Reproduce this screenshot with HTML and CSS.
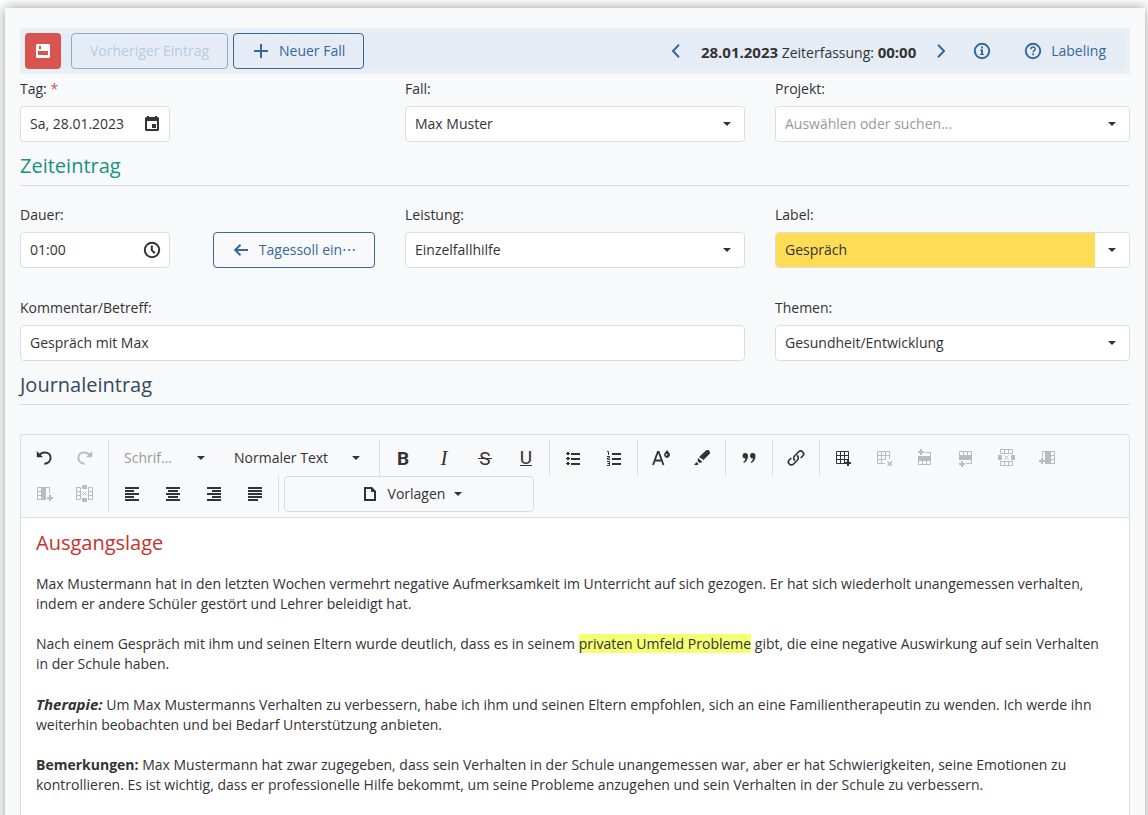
FILE: index.html
```html
<!DOCTYPE html>
<html lang="de">
<head>
  <meta charset="UTF-8">
  <meta name="viewport" content="width=device-width, initial-scale=1.0">
  <title>Zeiteintrag</title>
  <link rel="stylesheet" href="styles.css">
</head>
<body>
  <!-- Icons -->
  <svg class="sprite" aria-hidden="true">
    <symbol id="i-save" viewBox="0 0 18 18"><path fill="currentColor" fill-rule="evenodd" d="M3 2h12l1 1v12l-1 1H3l-1-1V3zM5 4v3h2V4zM4 9v4h10V9z"/></symbol>
    <symbol id="i-plus" viewBox="0 0 18 18"><path fill="currentColor" d="M8 2h2v6h6v2h-6v6H8v-6H2V8h6z"/></symbol>
    <symbol id="i-left" viewBox="0 0 18 18"><path class="line" d="M12 2.8L6 9l6 6.2"/></symbol>
    <symbol id="i-right" viewBox="0 0 18 18"><path class="line" d="M6 2.8L12 9l-6 6.2"/></symbol>
    <symbol id="i-info" viewBox="0 0 18 18"><circle class="line" cx="9" cy="9" r="7.2"/><path fill="currentColor" d="M8 4.500h2v2H8zM7 7.500h3V12h1v1H7v-1h1V8.500H7z"/></symbol>
    <symbol id="i-help" viewBox="0 0 18 18"><circle class="line" cx="9" cy="9" r="7.2"/><path class="line" stroke-width="1.5" d="M6.8 7.2C6.8 4.300 11.300 4.300 11.300 7c0 1.600-2.200 1.700-2.200 3.500"/><path fill="currentColor" d="M8.200 11.500H10v1.800H8.200z"/></symbol>
    <symbol id="i-back" viewBox="0 0 18 18"><path class="line" d="M16 9H3M8.500 3.800L3.200 9l5.300 5.200"/></symbol>
    <symbol id="i-calendar" viewBox="0 0 18 18"><path fill="currentColor" fill-rule="evenodd" d="M4 1h2v1h6V1h2v1h1l1 1v12l-1 1H3l-1-1V3l1-1h1zM4 6v8h10V6zM9 9h4v4H9z"/></symbol>
    <symbol id="i-clock" viewBox="0 0 18 18"><circle class="line" cx="9" cy="9" r="7.2"/><path class="line" d="M8.800 4.500V9.200l3 3"/></symbol>
    <symbol id="i-undo" viewBox="0 0 18 18"><path fill="currentColor" d="M1.800 2v6.200H8z"/><path class="line" d="M4.300 6.200C6 4 7.800 3.500 9.800 3.500c3.500 0 5.800 2.300 5.800 5.300 0 3.200-2.500 5.800-6.300 5.900"/></symbol>
    <symbol id="i-redo" viewBox="0 0 18 18"><path fill="currentColor" d="M16.200 2v6.200H10z"/><path class="line" d="M13.700 6.200C12 4 10.200 3.500 8.200 3.500c-3.500 0-5.800 2.300-5.800 5.300 0 3.200 2.500 5.800 6.300 5.900"/></symbol>
    <symbol id="i-bullets" viewBox="0 0 18 18"><path fill="currentColor" d="M3 3h2v1h1v1H5v1H3V5H2V4h1zM3 8h2v1h1v1H5v1H3v-1H2V9h1zM3 13h2v1h1v1H5v1H3v-1H2v-1h1zM7 4h9v2H7zM7 9h9v2H7zM7 14h9v2H7z"/></symbol>
    <symbol id="i-numbers" viewBox="0 0 18 18"><path fill="currentColor" d="M7 4h9v2H7zM7 9h9v2H7zM7 14h9v2H7z"/><path class="cells" d="M2 2.500h1.500V6M2 7.500h2.500V9H2.500v1.500H5M2 12.500h2.500v4H2M2.500 14.500h2"/></symbol>
    <symbol id="i-color" viewBox="0 0 18 18"><path class="line" stroke-width="1.8" d="M1 16L5.800 3h.9L11.500 16M3 11.500h6.500"/><path fill="currentColor" fill-rule="evenodd" d="M15 1l2.300 3a2.900 2.900 0 1 1-4.600 0zM13.600 5v1.500h1.600V5z"/></symbol>
    <symbol id="i-marker" viewBox="0 0 18 18"><path fill="currentColor" d="M13.500 1h2L17 3v1.500L10.500 11 6 8zM5 9l4.500 4-3 1L4.500 12zM3.500 13l2 2L4.500 16H1z"/></symbol>
    <symbol id="i-quote" viewBox="0 0 18 18"><path fill="currentColor" d="M5.200 4a2.700 2.700 0 0 1 2.800 3c0 3-1.500 5.700-4 7l-.8-1c1.600-1.100 2.200-2.200 2.200-3.500A2.700 2.700 0 1 1 5.200 4zM12.700 4a2.700 2.700 0 0 1 2.800 3c0 3-1.500 5.700-4 7l-.8-1c1.600-1.100 2.200-2.200 2.200-3.500A2.700 2.700 0 1 1 12.700 4z"/></symbol>
    <symbol id="i-link" viewBox="0 0 18 18"><path class="line" stroke-width="1.700" d="M8 11.500C6 10 6.500 8 8 6.500l3.500-3.500c1.300-1.300 3-1.200 4.200 0s1.200 2.800 0 4l-2 2M10 6.500c2 1.500 1.500 3.500 0 5L6.500 15c-1.300 1.300-3 1.200-4.200 0s-1.200-2.800 0-4l2-2"/></symbol>
    <symbol id="i-table-add" viewBox="0 0 18 18"><path class="cells" d="M14.500 11V2.500H2.500v12H11M2.500 6.500h12M2.500 10.500h12M6.500 2.500v12M10.500 2.500v12"/><path fill="currentColor" d="M13 11h2v2h2v2h-2v2h-2v-2h-2v-2h2z"/></symbol>
    <symbol id="i-table-del" viewBox="0 0 18 18"><path class="cells" d="M14.500 10V2.500H2.500v12H10M2.500 6.500h12M2.500 10.500h8M6.500 2.500v12M10.500 2.500v8"/><path class="line" stroke-width="1.400" d="M12.500 12.500l4.500 4.500M17 12.500L12.500 17"/></symbol>
    <symbol id="i-row-above" viewBox="0 0 18 18"><path class="cells" d="M9 3.500h5.500v12h-12v-4M6.500 11v4M10.500 11v4"/><path fill="currentColor" d="M2 7h13v5H2zM4 0h2v2h2v2H6v2H4V4H2V2h2z"/></symbol>
    <symbol id="i-row-below" viewBox="0 0 18 18"><path class="cells" d="M9 14.500h5.500v-12h-12v4M6.500 2v4M10.500 2v4"/><path fill="currentColor" d="M2 6h13v5H2zM4 12h2v2h2v2H6v2H4v-2H2v-2h2z"/></symbol>
    <symbol id="i-row-del" viewBox="0 0 18 18"><path class="cells" d="M2.500 .5h12v4h-12zM6.500 .5v4M10.500 .5v4M2.500 12.500h12v4h-12zM6.500 12.500v4M10.500 12.500v4"/><path class="cells" d="M6.500 6.500l4 4M10.500 6.500l-4 4"/><path fill="currentColor" d="M0 6h4v5H0zM13 6h4v5h-4z"/></symbol>
    <symbol id="i-col-left" viewBox="0 0 18 18"><path class="cells" d="M3.500 8V2.500h12v12H7M11 6.500h4M11 10.500h4"/><path fill="currentColor" d="M6 2h6v13H6zM2 9h2v2h2v2H4v2H2v-2H0v-2h2z"/></symbol>
    <symbol id="i-col-right" viewBox="0 0 18 18"><path class="cells" d="M14.500 8V2.500h-12v12H11M2 6.500h4M2 10.500h4"/><path fill="currentColor" d="M6 2h5v13H6zM14 10h2v2h2v2h-2v2h-2v-2h-2v-2h2z"/></symbol>
    <symbol id="i-col-del" viewBox="0 0 18 18"><path class="cells" d="M.5 2.500h4v12h-4zM.5 6.500h4M.5 10.500h4M12.500 2.500h4v12h-4zM12.500 6.500h4M12.500 10.500h4"/><path class="cells" d="M6.500 6.500l4 4M10.500 6.500l-4 4"/><path fill="currentColor" d="M6 0h5v4H6zM6 13h5v4H6z"/></symbol>
    <symbol id="i-al-left" viewBox="0 0 18 18"><path fill="currentColor" d="M2 2h14v2H2zM2 5h9v2H2zM2 8h14v2H2zM2 11h9v2H2zM2 14h14v2H2z"/></symbol>
    <symbol id="i-al-center" viewBox="0 0 18 18"><path fill="currentColor" d="M2 2h14v2H2zM4 5h10v2H4zM2 8h14v2H2zM4 11h10v2H4zM2 14h14v2H2z"/></symbol>
    <symbol id="i-al-right" viewBox="0 0 18 18"><path fill="currentColor" d="M2 2h14v2H2zM7 5h9v2H7zM2 8h14v2H2zM7 11h9v2H7zM2 14h14v2H2z"/></symbol>
    <symbol id="i-al-justify" viewBox="0 0 18 18"><path fill="currentColor" d="M2 2h14v2H2zM2 5h14v2H2zM2 8h14v2H2zM2 11h14v2H2zM2 14h10v2H2z"/></symbol>
    <symbol id="i-doc" viewBox="0 0 18 18"><path fill="currentColor" fill-rule="evenodd" d="M3 2h8l4 4v10H3zM5 4v10h8V7h-3V4z"/></symbol>
  </svg>

  <main class="card">
    <div class="topbar">
      <div class="topbar-inner">
        <button class="btn btn-save" type="button" aria-label="Speichern"><svg class="icon"><use href="#i-save"/></svg></button>
        <button class="btn btn-outline" type="button" disabled>Vorheriger Eintrag</button>
        <button class="btn btn-outline" type="button"><svg class="icon"><use href="#i-plus"/></svg>Neuer Fall</button>
        <div class="topbar-right">
          <button class="btn btn-icon" type="button" aria-label="Tag zurück"><svg class="icon"><use href="#i-left"/></svg></button>
          <span class="day"><b>28.01.2023</b> Zeiterfassung: <b>00:00</b></span>
          <button class="btn btn-icon" type="button" aria-label="Tag vor"><svg class="icon"><use href="#i-right"/></svg></button>
          <button class="btn btn-icon" type="button" aria-label="Info"><svg class="icon"><use href="#i-info"/></svg></button>
          <button class="btn btn-text" type="button"><svg class="icon"><use href="#i-help"/></svg>Labeling</button>
        </div>
      </div>
    </div>

    <form>
      <div class="grid">
        <div class="field">
          <label for="tag">Tag: <span class="required">*</span></label>
          <div class="box box-short">
            <input id="tag" type="text" value="Sa, 28.01.2023">
            <svg class="icon"><use href="#i-calendar"/></svg>
          </div>
        </div>
        <div class="field">
          <label for="fall">Fall:</label>
          <div class="box caret"><select id="fall"><option>Max Muster</option></select></div>
        </div>
        <div class="field">
          <label for="projekt">Projekt:</label>
          <div class="box caret"><select id="projekt" class="empty"><option>Auswählen oder suchen...</option></select></div>
        </div>
      </div>

      <h2 class="section section-time">Zeiteintrag</h2>

      <div class="grid grid-time">
        <div class="field">
          <label for="dauer">Dauer:</label>
          <div class="duration">
            <div class="box box-short">
              <input id="dauer" type="text" value="01:00">
              <svg class="icon"><use href="#i-clock"/></svg>
            </div>
            <button class="btn btn-outline btn-fill" type="button"><svg class="icon"><use href="#i-back"/></svg>Tagessoll ein⋯</button>
          </div>
        </div>
        <div class="field">
          <label for="leistung">Leistung:</label>
          <div class="box caret"><select id="leistung"><option>Einzelfallhilfe</option></select></div>
        </div>
        <div class="field">
          <label for="label">Label:</label>
          <div class="box caret"><select id="label" class="yellow"><option>Gespräch</option></select></div>
        </div>
        <div class="field wide">
          <label for="kommentar">Kommentar/Betreff:</label>
          <div class="box"><input id="kommentar" type="text" value="Gespräch mit Max"></div>
        </div>
        <div class="field">
          <label for="themen">Themen:</label>
          <div class="box caret"><select id="themen"><option>Gesundheit/Entwicklung</option></select></div>
        </div>
      </div>

      <h2 class="section">Journaleintrag</h2>
    </form>

    <div class="editor">
      <div class="tools" role="toolbar" aria-label="Formatierung">
        <button class="btn btn-tool" type="button" aria-label="Rückgängig"><svg class="icon"><use href="#i-undo"/></svg></button>
        <button class="btn btn-tool" type="button" aria-label="Wiederholen" disabled><svg class="icon"><use href="#i-redo"/></svg></button>
        <span class="sep"></span>
        <div class="pick pick-font caret"><select class="empty" aria-label="Schriftart"><option>Schrif...</option></select></div>
        <div class="pick pick-style caret"><select aria-label="Absatzformat"><option>Normaler Text</option></select></div>
        <span class="sep"></span>
        <button class="btn btn-tool" type="button" aria-label="Fett"><svg class="icon" viewBox="0 0 18 18"><text class="glyph glyph-bold" x="9" y="16" text-anchor="middle">B</text></svg></button>
        <button class="btn btn-tool" type="button" aria-label="Kursiv"><svg class="icon" viewBox="0 0 18 18"><text class="glyph glyph-italic" x="9" y="16" text-anchor="middle">I</text></svg></button>
        <button class="btn btn-tool" type="button" aria-label="Durchgestrichen"><svg class="icon" viewBox="0 0 18 18"><text class="glyph" x="9" y="16" text-anchor="middle">S</text><path fill="currentColor" d="M2 9h14v1H2z"/></svg></button>
        <button class="btn btn-tool" type="button" aria-label="Unterstrichen"><svg class="icon" viewBox="0 0 18 18"><text class="glyph" x="9" y="15" text-anchor="middle">U</text><path fill="currentColor" d="M3 16h12v1H3z"/></svg></button>
        <span class="sep"></span>
        <button class="btn btn-tool" type="button" aria-label="Aufzählung"><svg class="icon"><use href="#i-bullets"/></svg></button>
        <button class="btn btn-tool" type="button" aria-label="Nummerierung"><svg class="icon"><use href="#i-numbers"/></svg></button>
        <span class="sep"></span>
        <button class="btn btn-tool" type="button" aria-label="Textfarbe"><svg class="icon"><use href="#i-color"/></svg></button>
        <button class="btn btn-tool" type="button" aria-label="Hintergrundfarbe"><svg class="icon"><use href="#i-marker"/></svg></button>
        <span class="sep"></span>
        <button class="btn btn-tool" type="button" aria-label="Zitat"><svg class="icon"><use href="#i-quote"/></svg></button>
        <span class="sep"></span>
        <button class="btn btn-tool" type="button" aria-label="Link"><svg class="icon"><use href="#i-link"/></svg></button>
        <span class="sep"></span>
        <button class="btn btn-tool" type="button" aria-label="Tabelle einfügen"><svg class="icon"><use href="#i-table-add"/></svg></button>
        <button class="btn btn-tool" type="button" aria-label="Tabelle löschen" disabled><svg class="icon"><use href="#i-table-del"/></svg></button>
        <button class="btn btn-tool" type="button" aria-label="Zeile oberhalb" disabled><svg class="icon"><use href="#i-row-above"/></svg></button>
        <button class="btn btn-tool" type="button" aria-label="Zeile unterhalb" disabled><svg class="icon"><use href="#i-row-below"/></svg></button>
        <button class="btn btn-tool" type="button" aria-label="Zeile löschen" disabled><svg class="icon"><use href="#i-row-del"/></svg></button>
        <button class="btn btn-tool" type="button" aria-label="Spalte links" disabled><svg class="icon"><use href="#i-col-left"/></svg></button>
        <button class="btn btn-tool" type="button" aria-label="Spalte rechts" disabled><svg class="icon"><use href="#i-col-right"/></svg></button>
        <button class="btn btn-tool" type="button" aria-label="Spalte löschen" disabled><svg class="icon"><use href="#i-col-del"/></svg></button>
        <span class="sep"></span>
        <button class="btn btn-tool" type="button" aria-label="Linksbündig"><svg class="icon"><use href="#i-al-left"/></svg></button>
        <button class="btn btn-tool" type="button" aria-label="Zentriert"><svg class="icon"><use href="#i-al-center"/></svg></button>
        <button class="btn btn-tool" type="button" aria-label="Rechtsbündig"><svg class="icon"><use href="#i-al-right"/></svg></button>
        <button class="btn btn-tool" type="button" aria-label="Blocksatz"><svg class="icon"><use href="#i-al-justify"/></svg></button>
        <span class="sep"></span>
        <button class="btn btn-templates" type="button"><svg class="icon"><use href="#i-doc"/></svg>Vorlagen<span class="arrow"></span></button>
      </div>
      <div class="content" contenteditable="true" spellcheck="false" role="textbox" aria-label="Journaleintrag">
        <h3>Ausgangslage</h3>
        <p>Max Mustermann hat in den letzten Wochen vermehrt negative Aufmerksamkeit im Unterricht auf sich gezogen. Er hat sich wiederholt unangemessen verhalten, indem er andere Schüler gestört und Lehrer beleidigt hat.</p>
        <p>Nach einem Gespräch mit ihm und seinen Eltern wurde deutlich, dass es in seinem <mark>privaten Umfeld Probleme</mark> gibt, die eine negative Auswirkung auf sein Verhalten in der Schule haben.</p>
        <p><b><i>Therapie:</i></b> Um Max Mustermanns Verhalten zu verbessern, habe ich ihm und seinen Eltern empfohlen, sich an eine Familientherapeutin zu wenden. Ich werde ihn weiterhin beobachten und bei Bedarf Unterstützung anbieten.</p>
        <p><b>Bemerkungen:</b> Max Mustermann hat zwar zugegeben, dass sein Verhalten in der Schule unangemessen war, aber er hat Schwierigkeiten, seine Emotionen zu kontrollieren. Es ist wichtig, dass er professionelle Hilfe bekommt, um seine Probleme anzugehen und sein Verhalten in der Schule zu verbessern.</p>
      </div>
    </div>
  </main>
</body>
</html>
```
FILE: styles.css
```css
* {
  box-sizing: border-box;
}

body {
  margin: 0;
  padding: 8px 3px 0 5px;
  min-height: 100vh;
  display: flex;
  background: #fff;
  color: #333;
  font-family: "Open Sans", sans-serif;
  font-size: 14px;
  line-height: 20px;
}

button,
input,
select {
  font: inherit;
  color: inherit;
}

.sprite {
  position: absolute;
  width: 0;
  height: 0;
}

.icon {
  width: 18px;
  height: 18px;
  flex: none;
  stroke-width: 2;
}

.line,
.cells {
  fill: none;
  stroke: currentColor;
}

.cells {
  stroke-width: 1;
}

.glyph {
  fill: currentColor;
  font-family: Roboto, sans-serif;
  font-size: 19px;
}

.glyph-bold {
  font-weight: bold;
}

.glyph-italic {
  font-family: "Liberation Serif", serif;
  font-size: 21px;
  font-style: italic;
}

.card {
  flex: 1;
  min-width: 0;
  display: flex;
  flex-direction: column;
  padding: 20px 15px 0;
  background: #f8f9fb;
  box-shadow: 0 0 12px rgba(0, 0, 0, 0.4);
}

/* Kopfleiste */
.topbar {
  padding: 5px;
  background: #e9eff5;
}

.topbar-inner {
  display: flex;
  flex-wrap: wrap;
  gap: 5px;
  background: #e6ecf5;
}

.topbar-right {
  display: flex;
  align-items: center;
  gap: 5px;
  margin-left: auto;
}

.day {
  padding: 2px 2px 0;
}

.day b {
  font-size: 15px;
}

/* Buttons */
.btn {
  height: 36px;
  display: flex;
  align-items: center;
  justify-content: center;
  gap: 9px;
  padding: 0 18px;
  border: 1px solid transparent;
  border-radius: 4px;
  background: transparent;
  white-space: nowrap;
}

.btn-save {
  width: 36px;
  padding: 0;
  margin-right: 5px;
  background: #d9534f;
  color: #fff;
}

.btn-outline {
  border-color: #34699a;
  color: #34699a;
}

.btn-outline:disabled {
  border-color: #8eadcb;
  color: #b8cbe0;
}

.btn-icon {
  width: 36px;
  padding: 0;
  color: #34699a;
}

.btn-text {
  color: #34699a;
}

.btn-tool {
  width: 36px;
  padding: 0;
}

.btn-tool:disabled {
  color: #bbb;
}

/* Formular */
.grid {
  display: grid;
  grid-template-columns: 355fr 340fr 355fr;
  gap: 30px;
  padding-top: 5px;
}

.grid-time {
  padding-top: 19px;
}

.wide {
  grid-column: span 2;
}

.field {
  min-width: 0;
}

.field label {
  display: block;
  margin-bottom: 7px;
}

.required {
  color: #d9534f;
}

.box {
  position: relative;
  display: flex;
  align-items: center;
  height: 36px;
  border: 1px solid #ddd;
  border-radius: 4px;
  background: #fff;
  overflow: hidden;
}

.box-short {
  width: 150px;
  padding-right: 8px;
}

.box input,
.box select,
.pick select {
  flex: 1;
  min-width: 0;
  width: 100%;
  height: 100%;
  padding: 0 9px;
  border: 0;
  outline: 0;
  background: transparent;
  appearance: none;
}

.box input {
  padding-bottom: 2px;
}

.caret {
  position: relative;
}

.caret::after {
  content: "";
  position: absolute;
  top: 50%;
  right: 13px;
  margin-top: -2px;
  border: 4px solid transparent;
  border-top-color: #333;
  border-bottom: 0;
  pointer-events: none;
}

.caret select.empty {
  color: #999;
}

.box select.yellow {
  background: linear-gradient(to right, #ffdc56 calc(100% - 34px), #fff 0);
}

.duration {
  display: flex;
  justify-content: space-between;
}

.btn-fill {
  width: 162px;
}

.section {
  margin: 0;
  padding: 10px 0 5px;
  border-bottom: 1px solid #ddd;
  color: #34495e;
  font-size: 20px;
  font-weight: normal;
  line-height: 28px;
}

.section-time {
  color: #16937f;
}

/* Editor */
.editor {
  flex: 1;
  display: flex;
  flex-direction: column;
  margin-top: 29px;
  border: 1px solid #ddd;
  border-bottom: 0;
  border-radius: 4px 4px 0 0;
}

.tools {
  display: flex;
  flex-wrap: wrap;
  column-gap: 5px;
  padding: 5px 24px 5px 5px;
  border-bottom: 1px solid #ddd;
}

.sep {
  width: 1px;
  height: 36px;
  background: #ddd;
}

.pick {
  height: 36px;
}

.pick select {
  padding: 0 10px;
}

.pick::after {
  right: 14px;
}

.pick-font {
  width: 105px;
}

.pick-style {
  width: 150px;
}

.btn-templates {
  width: 250px;
  padding: 0 15px 0 20px;
  border-color: #ddd;
}

.arrow {
  border: 4px solid transparent;
  border-top-color: #333;
  border-bottom: 0;
}

.content {
  flex: 1;
  padding: 11px 15px 20px;
  background: #fff;
  outline: 0;
}

.content h3 {
  margin: 0 0 17px;
  color: #c9302c;
  font-size: 20px;
  font-weight: normal;
  line-height: 28px;
}

.content p {
  margin: 0 0 20px;
}

.content i {
  font-size: 15px;
}

.content mark {
  background: #f4ff74;
  color: inherit;
}
```
